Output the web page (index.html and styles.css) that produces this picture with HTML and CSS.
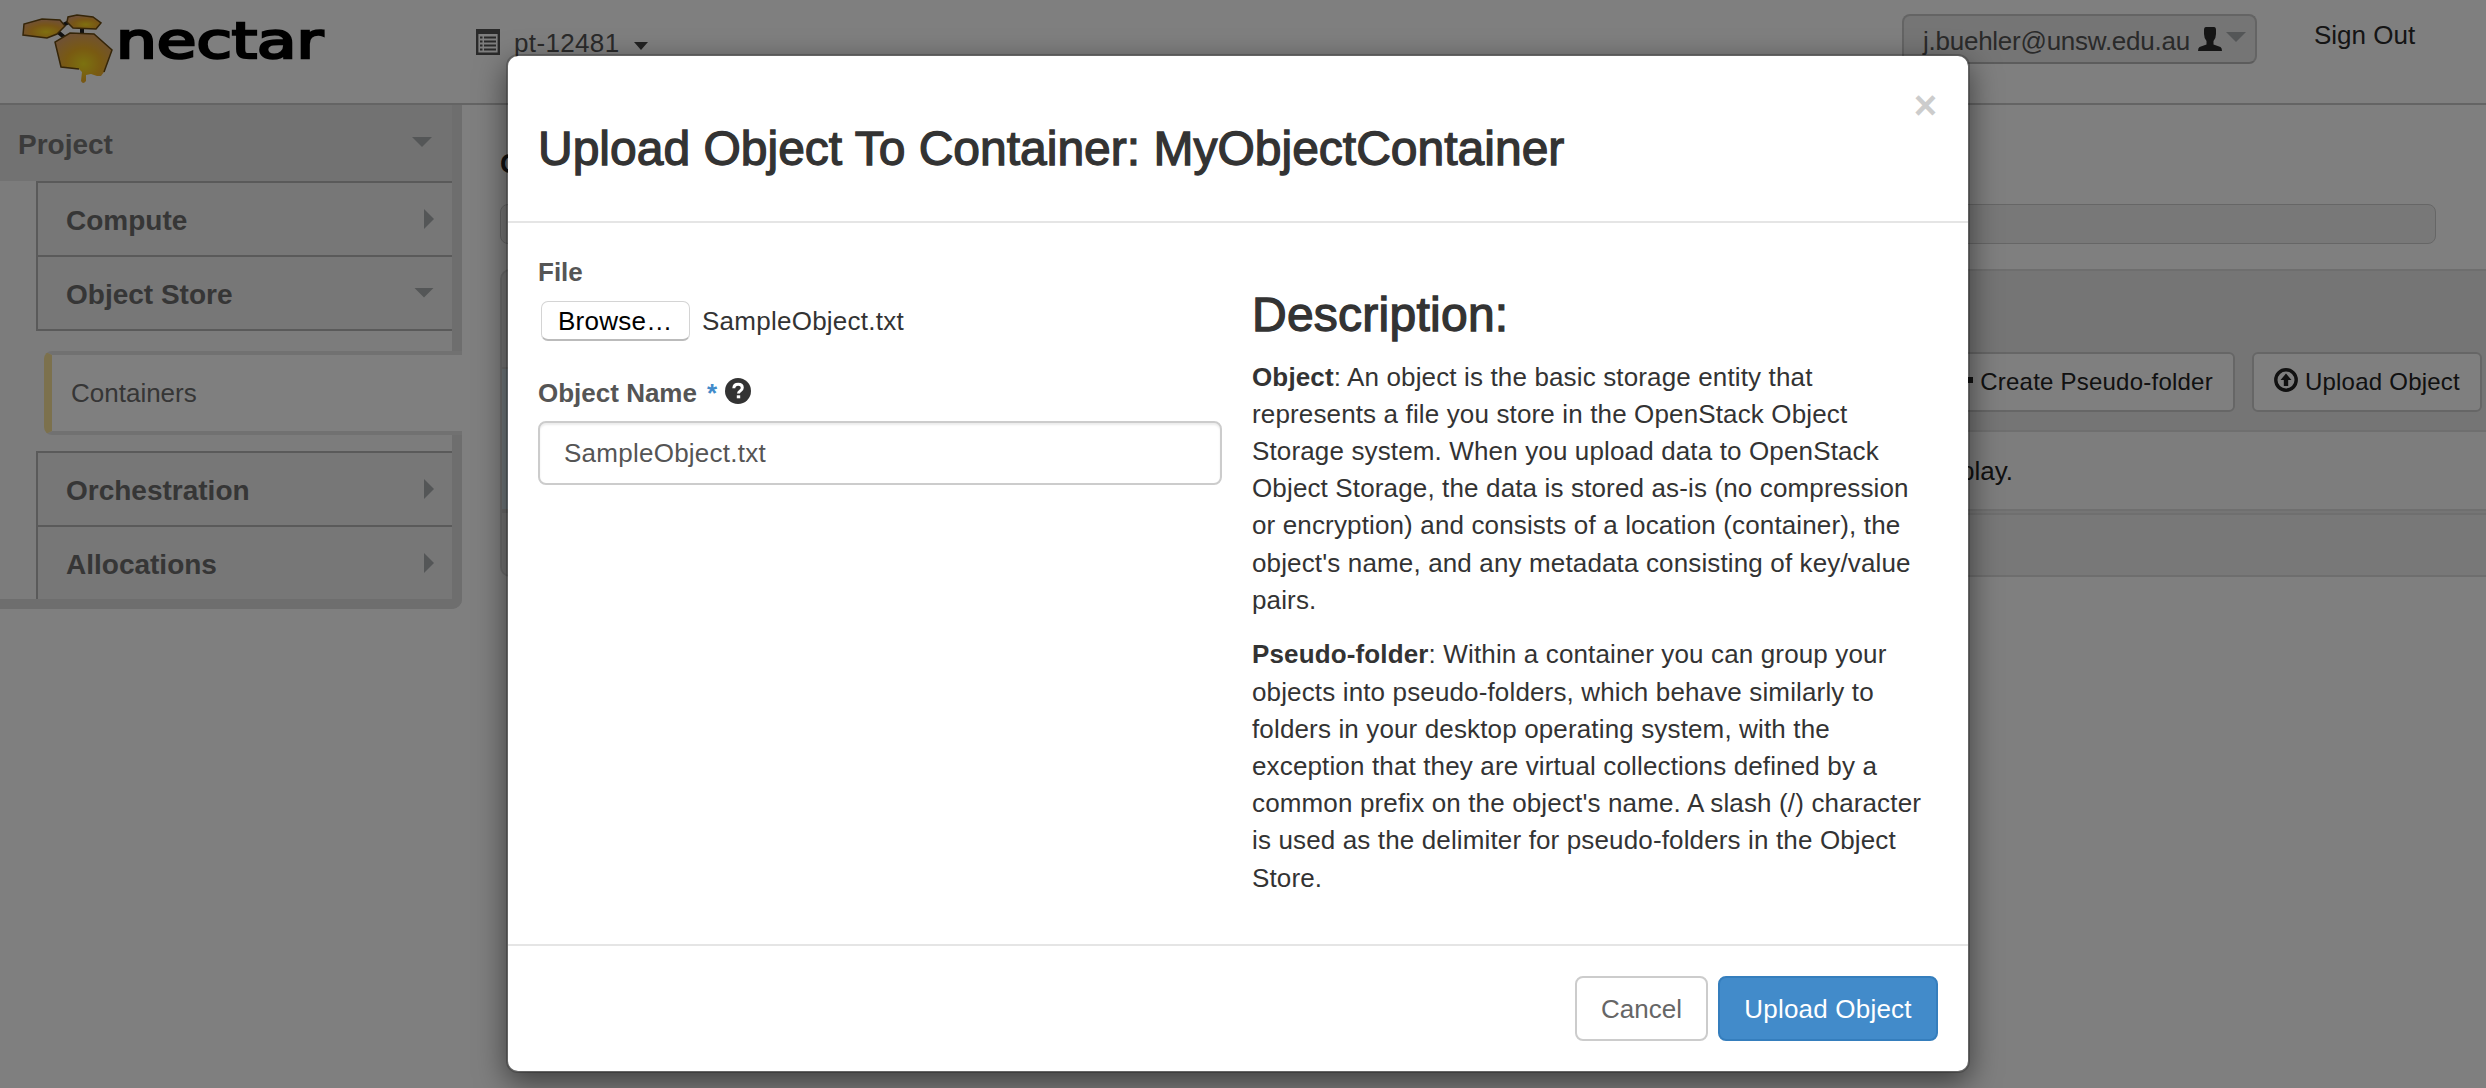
FILE: index.html
```html
<!DOCTYPE html>
<html lang="en">
<head>
<meta charset="utf-8">
<title>Containers</title>
<link rel="stylesheet" href="styles.css">
</head>
<body>
<div class="page">
  <header class="topbar">
    <svg class="logo" width="330" height="90" viewBox="0 0 330 90">
      <defs>
        <radialGradient id="honey" cx="55%" cy="68%" r="65%">
          <stop offset="0" stop-color="#ffe020"/>
          <stop offset="0.55" stop-color="#f0ac2c"/>
          <stop offset="1" stop-color="#e0a070"/>
        </radialGradient>
        <radialGradient id="drip" cx="50%" cy="62%" r="62%">
          <stop offset="0" stop-color="#f8e420"/>
          <stop offset="0.5" stop-color="#f2b424"/>
          <stop offset="1" stop-color="#e0a468"/>
        </radialGradient>
      </defs>
      <path d="M58 32l6 5M82 28v5M63 25l6-3" stroke="#222" stroke-width="4"/>
      <path d="M23 35L24 24 42 19 60 20 65 26 57 34 47 38Z" fill="url(#honey)" stroke="#6a4a10" stroke-width="1.5"/>
      <path d="M67 22L68 17 77 15 93 17 101 23 96 29 73 28Z" fill="url(#honey)" stroke="#6a4a10" stroke-width="1.5"/>
      <path d="M55 42L70 33 94 34 112 50 104 72 101 76 97 76 91 74 86 75V81Q83 85 81 81L82 72 79 69 61 67Z" fill="url(#drip)"/>
      <path d="M79 69L61 67 55 42 70 33 94 34 112 50 104 72" fill="none" stroke="#6a4a10" stroke-width="1.5"/>
      <text class="wordmark" x="116" y="57.500" textLength="207" lengthAdjust="spacingAndGlyphs">nectar</text>
    </svg>
    <div class="project-switch">
      <svg width="24" height="26" viewBox="0 0 24 26"><path d="M1.2 3h21.6v21.8H1.2z" fill="none" stroke="#555" stroke-width="2.4"/><path d="M0 0h24v5H0zM4 7.500h2.500v2H4zM8 7.500h12v2H8zM4 11.500h2.500v2H4zM8 11.500h12v2H8zM4 15.500h2.500v2H4zM8 15.500h12v2H8zM4 19.500h2.500v2H4zM8 19.500h12v2H8z" fill="#555"/></svg>
      <span class="project-name">pt-12481</span>
      <i class="caret"></i>
    </div>
    <div class="user-box">
      <span>j.buehler@unsw.edu.au</span>
      <svg width="24" height="24" viewBox="0 0 24 24"><path d="M8 0h8q2 0 2 3v4q0 4-2.500 7v3.500l7 2.500q1.500 1 1.500 4H0q0-3 1.500-4l7-2.500V14Q6 11 6 7V3q0-3 2-3z" fill="#2b2b2b"/></svg>
      <i class="tri-down"></i>
    </div>
    <a class="signout">Sign Out</a>
  </header>
  <div class="columns">
    <nav class="sidebar">
      <div class="dash">Project<i class="tri-down"></i></div>
      <div class="group">
        <div class="item">Compute<i class="tri-right"></i></div>
        <div class="item last">Object Store<i class="tri-down"></i></div>
      </div>
      <div class="active">Containers</div>
      <div class="group">
        <div class="item">Orchestration<i class="tri-right"></i></div>
        <div class="item">Allocations<i class="tri-right"></i></div>
      </div>
    </nav>
    <main class="content">
      <h2 class="heading">Containers</h2>
      <div class="crumbs"></div>
      <div class="tables">
        <section class="table-left">
          <div class="left-head"></div>
          <div class="left-row"></div>
          <div class="left-foot"></div>
        </section>
        <section class="table-right">
          <div class="actions">
            <div class="btn-sm"><svg width="22" height="24" viewBox="0 0 22 24"><path d="M8 3h6v6h8v6h-8v6H8v-6H0V9h8z" fill="#222"/></svg>Create Pseudo-folder</div>
            <div class="btn-sm"><svg width="24" height="24" viewBox="0 0 24 24"><circle cx="12" cy="12" r="10.200" fill="none" stroke="#222" stroke-width="3.400"/><path d="M12 5.500l5.500 6.500h-3.300v6H9.800v-6H6.500z" fill="#222"/></svg>Upload Object</div>
          </div>
          <div class="empty">display.</div>
          <div class="foot"></div>
        </section>
      </div>
    </main>
  </div>
</div>
<div class="backdrop"></div>
<div class="modal">
  <div class="modal-header">
    <h3>Upload Object To Container: MyObjectContainer</h3>
    <span class="close">×</span>
  </div>
  <div class="modal-body">
    <div class="form">
      <label class="label">File</label>
      <div class="file"><span class="browse">Browse…</span><span class="file-name">SampleObject.txt</span></div>
      <label class="label name-label">Object Name <b class="star">*</b><svg width="26" height="26" viewBox="0 0 26 26"><circle cx="13" cy="13" r="13" fill="#333"/><path d="M8.800 10.300Q9 6.300 13.200 6.300 17.300 6.300 17.300 9.800 17.300 11.800 15.200 13 13.500 14 13.500 15.600" fill="none" stroke="#fff" stroke-width="3"/><path d="M11.800 17.300h3.400v3h-3.400z" fill="#fff"/></svg></label>
      <div class="input">SampleObject.txt</div>
    </div>
    <div class="desc">
      <h3>Description:</h3>
      <p><b>Object</b>: An object is the basic storage entity that<br>represents a file you store in the OpenStack Object<br>Storage system. When you upload data to OpenStack<br>Object Storage, the data is stored as-is (no compression<br>or encryption) and consists of a location (container), the<br>object's name, and any metadata consisting of key/value<br>pairs.</p>
      <p><b>Pseudo-folder</b>: Within a container you can group your<br>objects into pseudo-folders, which behave similarly to<br>folders in your desktop operating system, with the<br>exception that they are virtual collections defined by a<br>common prefix on the object's name. A slash (/) character<br>is used as the delimiter for pseudo-folders in the Object<br>Store.</p>
    </div>
  </div>
  <div class="modal-footer">
    <div class="btn">Cancel</div>
    <div class="btn primary">Upload Object</div>
  </div>
</div>
</body>
</html>
```
FILE: styles.css
```css
* { box-sizing: border-box; }
html, body { margin: 0; height: 1088px; overflow: hidden; }
body { font: 26px/37.2px "Liberation Sans", Arial, sans-serif; color: #333; background: #fff; }
h2, h3, p { margin: 0; }
svg { display: block; flex: none; }

.page { width: 2486px; height: 1088px; }
.topbar { display: flex; align-items: flex-start; height: 105px; border-bottom: 2px solid #c8c8c8; color: #555; white-space: nowrap; }
.logo { margin-right: 146px; }
.wordmark { font: 50px "DejaVu Sans", sans-serif; fill: #000; stroke: #000; stroke-width: 2.6px; }
.project-switch { display: flex; width: 1426px; padding-top: 25px; }
.project-switch svg { margin-top: 4px; }
.project-name { margin-left: 14px; width: 106px; letter-spacing: 0.35px; }
.caret { margin: 17px 0 0 14px; width: 14px; height: 8px; background: #444; clip-path: polygon(0 0, 100% 0, 50% 100%); }
.user-box { display: flex; width: 355px; height: 50px; margin-top: 14px; padding: 7px 0 0 19px; border: 2px solid #c8c8c8; border-bottom-color: #b8b8b8; border-radius: 8px; background: #ebebeb; }
.user-box span { width: 275px; letter-spacing: -0.25px; }
.user-box svg { margin-top: 4px; }
.user-box .tri-down { margin: 9px 0 0 4px; }
.signout { margin: 17px 0 0 57px; color: #2b2b2b; }
.tri-down { width: 20px; height: 10px; background: #a8acae; clip-path: polygon(0 0, 100% 0, 50% 100%); }
.tri-right { width: 10px; height: 20px; background: #a8acae; clip-path: polygon(0 0, 100% 50%, 0 100%); }

.columns { display: flex; align-items: flex-start; }
.sidebar { width: 462px; height: 504px; border: solid #ddd; border-width: 0 10px 10px 0; border-radius: 0 0 10px 0; background: #f9f9f9; }
.dash { display: flex; align-items: center; justify-content: space-between; height: 76px; padding: 4px 20px 0 18px; background: #e5e5e5; font-size: 28px; font-weight: bold; color: #777; }
.dash .tri-down { margin-bottom: 6px; }
.group { margin-left: 36px; border-left: 2px solid #b5b5b5; }
.item { display: flex; align-items: center; justify-content: space-between; height: 74px; padding: 4px 18px 0 28px; border-top: 2px solid #b5b5b5; background: #eee; font-size: 28px; font-weight: bold; color: #6c6c6c; }
.item i { margin-bottom: 4px; }
.item.last { height: 76px; border-bottom: 2px solid #b5b5b5; }
.item.last i { margin-bottom: 5px; }
.active { display: flex; align-items: center; width: 418px; height: 84px; margin: 20px 0 16px 44px; padding: 2px 0 0 19px; border: solid #e2e2e2; border-width: 4px 0; border-left: 8px solid #f9e29a; border-radius: 8px 0 0 8px; background: #fff; color: #6c6c6c; }

.content { flex: 1; padding: 40px 0 0 38px; }
.heading { height: 59px; width: 30px; overflow: hidden; font-size: 28px; color: #222; }
.crumbs { width: 1936px; height: 40px; border: 1px solid #ccc; border-radius: 8px; background: #f0f0f0; }
.tables { display: flex; margin-top: 25px; }
.table-left { width: 600px; height: 308px; border: 2px solid #ddd; border-radius: 10px; background: #eee; }
.left-head { height: 98px; border-bottom: 2px solid #ddd; }
.left-row { height: 144px; border-bottom: 4px solid #ddd; background: #e2f3fb; }
.table-right { flex: 1; border: solid #ddd; border-width: 2px 0; background: #ebebeb; }
.actions { display: flex; justify-content: flex-end; gap: 17px; height: 161px; padding: 81px 4px 0 0; border-bottom: 2px solid #dedede; }
.btn-sm { display: flex; align-items: center; gap: 7px; height: 60px; padding: 0 20px; border: 2px solid #ccc; border-radius: 6px; background: #fff; font-size: 24px; letter-spacing: 0.23px; color: #222; white-space: nowrap; }
.btn-sm svg { margin-bottom: 4px; }
.empty { height: 79px; padding: 21px 473px 0 0; border-bottom: 2px solid #dedede; background: #fafafa; color: #222; text-align: right; }
.foot { height: 62px; margin-top: 2px; border-top: 2px solid #dedede; background: #f0f0f0; }

.backdrop { position: absolute; inset: 0; background: rgba(0, 0, 0, 0.5); }
.modal { position: absolute; left: 506px; top: 54px; width: 1464px; height: 1019px; border: 2px solid rgba(0, 0, 0, 0.2); border-radius: 12px; background: #fff; background-clip: padding-box; box-shadow: 0 10px 30px rgba(0, 0, 0, 0.5); white-space: nowrap; }
.modal h3 { font-size: 48px; line-height: 52px; font-weight: normal; -webkit-text-stroke: 1.3px #333; }
.modal-header { display: flex; justify-content: space-between; height: 167px; padding: 67px 31px 0 30px; border-bottom: 2px solid #e5e5e5; }
.close { margin-top: -39px; height: 42px; line-height: 42px; font-size: 40px; font-weight: bold; color: #ccc; }
.modal-body { display: flex; height: 721px; padding-left: 30px; }
.form { width: 684px; padding-top: 29px; letter-spacing: 0.25px; }
.label { display: flex; height: 38px; line-height: 40px; font-weight: bold; letter-spacing: 0; color: #555; }
.file { display: flex; height: 40px; margin: 11px 0 33px 3px; }
.browse { width: 149px; height: 40px; padding-left: 16px; line-height: 38px; border: 1px solid #d4d4d4; border-bottom: 2px solid #bbb; border-radius: 7px; color: #000; }
.file-name { margin-left: 12px; line-height: 40px; }
.star { margin-left: 10px; color: #428bca; }
.name-label { line-height: 38px; }
.name-label svg { margin: 4px 0 0 8px; }
.input { height: 64px; margin-top: 9px; padding: 0 24px; line-height: 60px; border: 2px solid #ccc; border-radius: 8px; box-shadow: inset 0 2px 2px rgba(0, 0, 0, 0.075); color: #555; }
.desc { margin-left: 30px; padding-top: 66px; }
.desc h3 { letter-spacing: 0.25px; }
.desc p { margin-top: 17.500px; letter-spacing: 0.14px; }
.modal-footer { display: flex; justify-content: flex-end; gap: 10px; height: 127px; padding: 30px 30px 0; border-top: 2px solid #e5e5e5; }
.btn { width: 133px; height: 65px; line-height: 62px; text-align: center; border: 2px solid #ccc; border-radius: 8px; color: #666; }
.primary { width: 220px; border-color: #357ebd; background: #428bca; color: #fff; letter-spacing: 0.2px; }
```
